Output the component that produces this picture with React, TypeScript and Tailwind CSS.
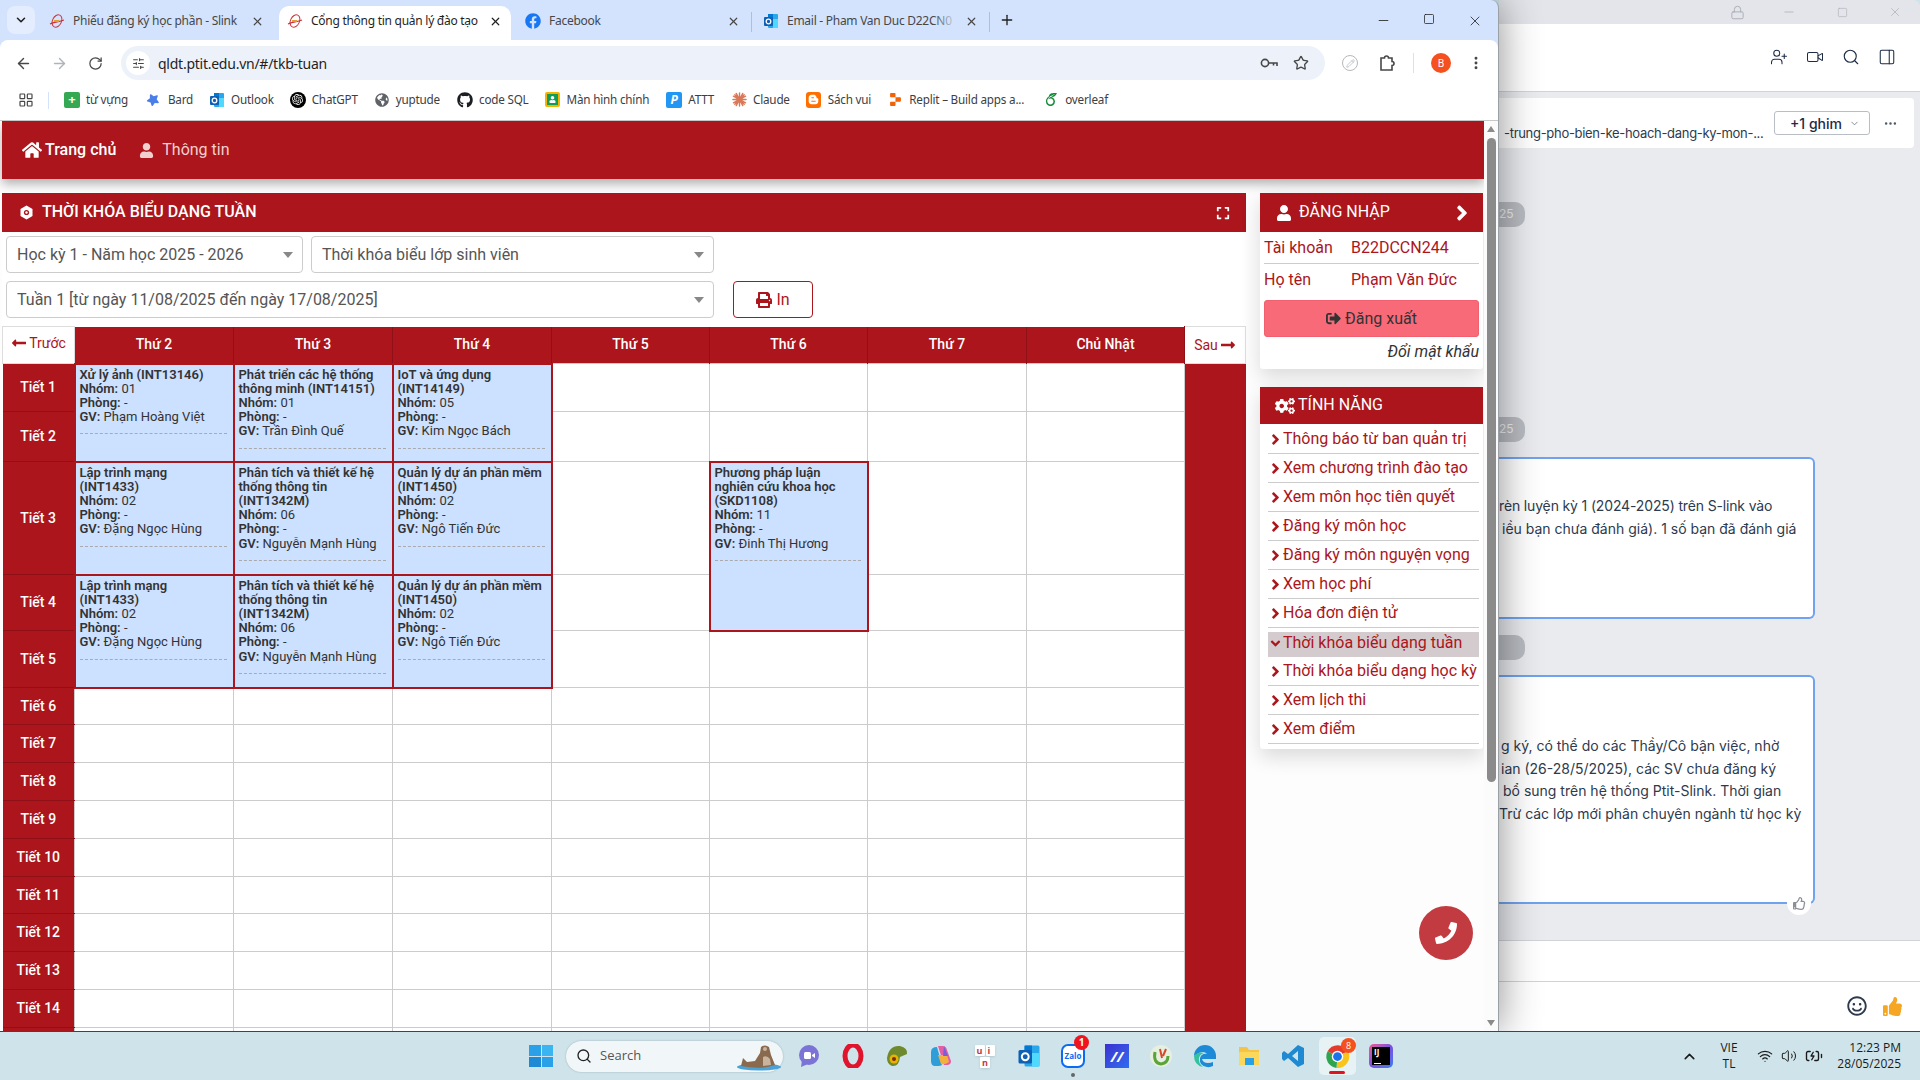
import { ReactNode } from "react";
import {
    FaHome, FaUser, FaPrint, FaLongArrowAltLeft, FaLongArrowAltRight, FaSignOutAlt, FaCogs,
    FaAngleRight, FaAngleDown, FaExpand, FaPhoneAlt, FaFacebook, FaGithub, FaGlobeAmericas,
    FaBloggerB, FaStar, FaThumbsUp, FaRegThumbsUp, FaRegSmile,
} from "react-icons/fa";
import { SiOpenai, SiReplit, SiOverleaf } from "react-icons/si";
import {
    ArrowLeft, ArrowRight, RotateCw, X, Plus, Minus, Square, ChevronDown, ChevronUp, Star,
    EllipsisVertical, LayoutGrid, SlidersHorizontal, Search, Lock, UserPlus,
    Video, PanelRight, Ellipsis, Wifi, Volume2, BatteryCharging, Pencil,
} from "lucide-react";

const RED = "bg-[#ab151b]";

function PtitIcon() {
    return (
        <svg width="16" height="16" viewBox="0 0 16 16" fill="none">
            <ellipse cx="8" cy="8" rx="4.5" ry="6.5" stroke="#c8323a" strokeWidth="1" transform="rotate(25 8 8)" />
            <path d="M1 11 C5 9 10 9 15 7" stroke="#c8323a" strokeWidth="1.2" />
            <rect x="5" y="7" width="5" height="2" fill="#e0a030" />
        </svg>
    );
}

function OutlookIcon({ size = 16 }: { size?: number }) {
    return (
        <svg width={size} height={size} viewBox="0 0 16 16">
            <rect x="5" y="1" width="10" height="14" rx="1" fill="#28a8ea" />
            <rect x="5" y="1" width="5" height="5" fill="#0078d4" />
            <rect x="10" y="6" width="5" height="9" fill="#50d9ff" />
            <rect x="1" y="4" width="9" height="9" rx="1" fill="#0f5fb5" />
            <circle cx="5.5" cy="8.5" r="2.3" fill="none" stroke="#fff" strokeWidth="1.3" />
        </svg>
    );
}

function ChromeLogo({ size = 24 }: { size?: number }) {
    return (
        <svg width={size} height={size} viewBox="0 0 24 24">
            <path d="M12 12 L2.5 7 A11 11 0 0 1 22 7 Z" fill="#e33b2e" />
            <path d="M12 12 L22 7 A11 11 0 0 1 11 23 Z" fill="#f8c51c" />
            <path d="M12 12 L11 23 A11 11 0 0 1 2.5 7 Z" fill="#2ea44f" />
            <circle cx="12" cy="12" r="5.5" fill="#fff" />
            <circle cx="12" cy="12" r="4.2" fill="#1a73e8" />
        </svg>
    );
}

function Tab({ icon, title, active, sep, fade }: { icon: ReactNode; title: string; active?: boolean; sep?: boolean; fade?: boolean }) {
    return (
        <div className="relative h-[34px] w-[238px] shrink-0">
            {active && <div className="absolute left-0 top-0 h-[34px] w-[232px] rounded-t-[10px] bg-white" />}
            {sep && <span className="absolute right-[3px] top-[6px] h-[20px] w-px bg-[#a8c0e8]" />}
            <div className="relative flex items-center pl-[8px] pt-[7px]">
                <span className="flex w-[16px] shrink-0 justify-center">{icon}</span>
                <span className={`relative ml-[8px] w-[170px] overflow-hidden whitespace-nowrap text-[12px] leading-4 tracking-[-0.27px] ${active ? "text-[#1f1f1f]" : "text-[#474747]"}`}>
                    {title}
                    {fade && <span className="absolute right-0 top-0 h-full w-[24px] bg-gradient-to-r from-transparent to-[#d3e3fd]" />}
                </span>
                <X size={13} strokeWidth={2.2} className={`ml-[8px] ${active ? "text-[#1f1f1f]" : "text-[#474747]"}`} />
            </div>
        </div>
    );
}

function Bookmark({ icon, label, gap }: { icon: ReactNode; label: string; gap: number }) {
    return (
        <div className="flex shrink-0 items-center" style={{ marginRight: gap }}>
            <span className="flex w-[18px] justify-center">{icon}</span>
            <span className="ml-[5px] whitespace-nowrap text-[11.7px] tracking-[-0.2px] text-[#3c4043]">{label}</span>
        </div>
    );
}

function SelectBox({ label, className }: { label: string; className: string }) {
    return (
        <div className={`flex h-[37px] items-center justify-between rounded-[4px] border border-[#ccc] bg-white pl-[10px] pr-[9px] text-[16px] text-[#555] ${className}`}>
            <span>{label}</span>
            <span className="h-0 w-0 border-x-[5px] border-t-[6px] border-x-transparent border-t-[#888]" />
        </div>
    );
}

type Course = { name: string; group: string; teacher: string };

function EventCell({ course, rowSpan }: { course: Course; rowSpan?: number }) {
    return (
        <td rowSpan={rowSpan} className="border-2 border-[#ab151b] bg-[#cce0ff] pl-[4px] pr-[6px] pt-[3px] align-top text-[13px] leading-[14.2px] text-[#333]">
            <div className="font-semibold">{course.name}</div>
            <div><b className="font-semibold">Nhóm:</b> {course.group}</div>
            <div><b className="font-semibold">Phòng:</b> -</div>
            <div><b className="font-semibold">GV:</b> {course.teacher}</div>
            <div className="mt-[9px] border-t border-dashed border-[#aaa]" />
        </td>
    );
}

const courses: Record<string, Course> = {
    anh: { name: "Xử lý ảnh (INT13146)", group: "01", teacher: "Phạm Hoàng Việt" },
    he: { name: "Phát triển các hệ thống thông minh (INT14151)", group: "01", teacher: "Trần Đình Quế" },
    iot: { name: "IoT và ứng dụng (INT14149)", group: "05", teacher: "Kim Ngọc Bách" },
    mang: { name: "Lập trình mạng (INT1433)", group: "02", teacher: "Đặng Ngọc Hùng" },
    ptich: { name: "Phân tích và thiết kế hệ thống thông tin (INT1342M)", group: "06", teacher: "Nguyễn Mạnh Hùng" },
    qlda: { name: "Quản lý dự án phần mềm (INT1450)", group: "02", teacher: "Ngô Tiến Đức" },
    nckh: { name: "Phương pháp luận nghiên cứu khoa học (SKD1108)", group: "11", teacher: "Đinh Thị Hương" },
};

const days = ["Thứ 2", "Thứ 3", "Thứ 4", "Thứ 5", "Thứ 6", "Thứ 7", "Chủ Nhật"];
const rowHeights = [48, 50, 113, 56, 57, 37, 38, 38, 38, 38, 37, 38, 38, 38];

const Blank = () => <td className="border border-[#ccc] bg-white" />;
const PeriodCell = ({ label }: { label: string }) => (
    <td className={`border-y border-[#8f1016] ${RED} text-center text-[14px] font-medium text-white`}>{label}</td>
);
const EndCell = () => <td className={`border-y border-[#ab151b] ${RED}`} />;

function Timetable() {
    const rows: ReactNode[] = [];
    for (let i = 0; i < 14; i++) {
        let cells: ReactNode;
        if (i === 0) cells = (<>
            <EventCell course={courses.anh} rowSpan={2} /><EventCell course={courses.he} rowSpan={2} /><EventCell course={courses.iot} rowSpan={2} />
            <Blank /><Blank /><Blank /><Blank />
        </>);
        else if (i === 1) cells = (<><Blank /><Blank /><Blank /><Blank /></>);
        else if (i === 2) cells = (<>
            <EventCell course={courses.mang} /><EventCell course={courses.ptich} /><EventCell course={courses.qlda} />
            <Blank /><EventCell course={courses.nckh} rowSpan={2} /><Blank /><Blank />
        </>);
        else if (i === 3) cells = (<>
            <EventCell course={courses.mang} rowSpan={2} /><EventCell course={courses.ptich} rowSpan={2} /><EventCell course={courses.qlda} rowSpan={2} />
            <Blank /><Blank /><Blank />
        </>);
        else if (i === 4) cells = (<><Blank /><Blank /><Blank /><Blank /></>);
        else cells = (<><Blank /><Blank /><Blank /><Blank /><Blank /><Blank /><Blank /></>);
        rows.push(
            <tr key={i} style={{ height: rowHeights[i] }}>
                <PeriodCell label={`Tiết ${i + 1}`} />
                {cells}
                <EndCell />
            </tr>
        );
    }
    return (
        <table className="w-[1243px] table-fixed border-collapse">
            <colgroup>
                <col className="w-[72px]" />
                <col className="w-[159px]" /><col className="w-[159px]" /><col className="w-[159px]" />
                <col className="w-[158px]" /><col className="w-[158px]" /><col className="w-[159px]" /><col className="w-[158px]" />
                <col className="w-[61px]" />
            </colgroup>
            <thead>
                <tr className="h-[37px]">
                    <th className="border border-[#ddd] bg-white text-[14px] font-normal text-[#ab151b]">
                        <span className="inline-flex items-center gap-[2px]"><FaLongArrowAltLeft size={16} />Trước</span>
                    </th>
                    {days.map((d) => (
                        <th key={d} className={`border-x border-[#8f1016] ${RED} text-[14px] font-medium text-white`}>{d}</th>
                    ))}
                    <th className="border border-[#ddd] bg-white text-[14px] font-normal text-[#ab151b]">
                        <span className="inline-flex items-center gap-[2px]">Sau<FaLongArrowAltRight size={16} /></span>
                    </th>
                </tr>
            </thead>
            <tbody>
                {rows}
                <tr className="h-[20px]">
                    <td className={RED} /><Blank /><Blank /><Blank /><Blank /><Blank /><Blank /><Blank /><td className={RED} />
                </tr>
            </tbody>
        </table>
    );
}

const menuItems = [
    "Thông báo từ ban quản trị", "Xem chương trình đào tạo", "Xem môn học tiên quyết", "Đăng ký môn học",
    "Đăng ký môn nguyện vọng", "Xem học phí", "Hóa đơn điện tử", "Thời khóa biểu dạng tuần",
    "Thời khóa biểu dạng học kỳ", "Xem lịch thi", "Xem điểm",
];

function Sidebar() {
    return (
        <div className="w-[223px] shrink-0 text-[16px] text-[#ab151b]">
            <div className="rounded-[3px] bg-white shadow-[0_8px_20px_rgba(0,0,0,0.14)]">
                <div className={`flex h-[39px] items-center ${RED} pl-[16px] pr-[9px] text-white`}>
                    <FaUser size={16} />
                    <span className="ml-[7px] flex-1 pb-[2px]">ĐĂNG NHẬP</span>
                    <FaAngleRight size={24} />
                </div>
                <div className="px-[4px] pb-[6px]">
                    <div className="flex h-[32px] items-center border-b border-[#ccc]">
                        <span className="w-[87px]">Tài khoản</span><span>B22DCCN244</span>
                    </div>
                    <div className="flex h-[32px] items-center">
                        <span className="w-[87px]">Họ tên</span><span>Phạm Văn Đức</span>
                    </div>
                    <div className="mt-[4px] flex h-[37px] items-center justify-center gap-[4px] rounded-[3px] border border-[#f0606e] bg-[#f96a79] text-[#333]">
                        <FaSignOutAlt size={15} />Đăng xuất
                    </div>
                    <div className="mt-[4px] text-right text-[16px] italic leading-[22px] text-[#333]">Đổi mật khẩu</div>
                </div>
            </div>
            <div className="mt-[18px] rounded-[3px] bg-white pb-[5px] shadow-[0_8px_20px_rgba(0,0,0,0.14)]">
                <div className={`flex h-[37px] items-center ${RED} pl-[15px] text-white`}>
                    <FaCogs size={20} />
                    <span className="ml-[3px] pb-[1px]">TÍNH NĂNG</span>
                </div>
                <div className="pl-[8px] pr-[4px] pt-[1px]">
                    {menuItems.map((item) => {
                        const active = item === "Thời khóa biểu dạng tuần";
                        return (
                            <div key={item} className={`flex h-[29px] whitespace-nowrap ${active ? "items-end" : "items-center border-b border-[#ccc]"}`}>
                                <div className={`flex h-[25px] w-full items-center ${active ? "bg-[#d3cbcd] pb-[3px]" : ""}`}>
                                    {active ? <FaAngleDown size={15} className="w-[15px] shrink-0" /> : <FaAngleRight size={17} className="w-[15px] shrink-0" />}
                                    <span>{item}</span>
                                </div>
                            </div>
                        );
                    })}
                </div>
            </div>
        </div>
    );
}

function ChromeWindow() {
    return (
        <div className="relative z-10 flex h-full w-[1499px] shrink-0 flex-col overflow-hidden rounded-tr-[8px] border-r border-[#9aa0a6] bg-[#d3e3fd] font-['Noto_Sans',sans-serif] shadow-[0_0_42px_rgba(0,0,0,0.45)]">
            <div className="flex h-[40px] shrink-0 items-end">
                <div className="mb-[6px] ml-[7px] flex h-[28px] w-[28px] items-center justify-center rounded-[8px] bg-[#e3edfd]">
                    <ChevronDown size={14} strokeWidth={2.6} className="text-[#1f1f1f]" />
                </div>
                <div className="ml-[6px] flex">
                    <Tab icon={<PtitIcon />} title="Phiếu đăng ký học phần - Slink" />
                    <Tab icon={<PtitIcon />} title="Cổng thông tin quản lý đào tạo" active />
                    <Tab icon={<FaFacebook size={16} className="text-[#1877f2]" />} title="Facebook" sep />
                    <Tab icon={<OutlookIcon />} title="Email - Pham Van Duc D22CN0" sep fade />
                </div>
                <Plus size={16} strokeWidth={2} className="mb-[12px] ml-[6px] text-[#1f1f1f]" />
                <div className="mb-[11px] ml-auto flex">
                    <span className="flex w-[46px] justify-center"><Minus size={15} strokeWidth={1.3} className="text-[#1f1f1f]" /></span>
                    <span className="flex w-[46px] justify-center"><Square size={12} strokeWidth={1.5} className="text-[#1f1f1f]" /></span>
                    <span className="flex w-[46px] justify-center"><X size={16} strokeWidth={1.2} className="text-[#1f1f1f]" /></span>
                </div>
            </div>

            <div className="flex h-[46px] shrink-0 items-center rounded-t-[8px] bg-white pl-[5px]">
                <span className="flex w-[36px] justify-center"><ArrowLeft size={17} className="text-[#474747]" /></span>
                <span className="flex w-[36px] justify-center"><ArrowRight size={17} className="text-[#b0b3b8]" /></span>
                <span className="flex w-[36px] justify-center"><RotateCw size={15} className="text-[#474747]" /></span>
                <div className="ml-[8px] flex h-[34px] w-[1204px] items-center rounded-full bg-[#edf2fa] pl-[5px] pr-[16px]">
                    <span className="flex h-[24px] w-[24px] items-center justify-center rounded-full bg-white"><SlidersHorizontal size={13} className="text-[#474747]" /></span>
                    <span className="ml-[8px] flex-1 text-[14px] tracking-[-0.25px] text-[#1f1f1f]">qldt.ptit.edu.vn/#/tkb-tuan</span>
                    <svg width="18" height="12" viewBox="0 0 18 12" fill="none" stroke="#474747" strokeWidth="1.6" className="mr-[15px]">
                        <circle cx="5" cy="6" r="3.6" />
                        <path d="M9 6 H17 V9 M13.5 6 V8.5" />
                    </svg>
                    <Star size={16} strokeWidth={2} className="text-[#474747]" />
                </div>
                <span className="ml-[17px] flex h-[16px] w-[16px] items-center justify-center rounded-full border border-[#b5b8bc]"><Pencil size={9} className="text-[#b5b8bc]" /></span>
                <svg width="17" height="18" viewBox="0 0 17 18" fill="none" stroke="#474747" strokeWidth="1.6" className="ml-[21px]">
                    <path d="M2 4 H5.5 A2 2 0 0 1 9.5 4 H13 V7.5 A2 2 0 0 1 13 11.5 V16 H2 Z" />
                </svg>
                <span className="ml-[17px] h-[20px] w-px bg-[#d3e3fd]" />
                <span className="ml-[17px] flex h-[20px] w-[20px] items-center justify-center rounded-full bg-[#f4511e] text-[10px] text-white">B</span>
                <EllipsisVertical size={16} strokeWidth={2.4} className="ml-[17px] text-[#474747]" />
            </div>

            <div className="flex h-[35px] shrink-0 items-center border-b border-[#c7c7c7] bg-white pb-[6px] pl-[18px]">
                <LayoutGrid size={16} strokeWidth={1.8} className="text-[#474747]" />
                <span className="ml-[14px] mr-[14px] h-[17px] w-px bg-[#d3e3fd]" />
                <Bookmark gap={17} label="từ vựng" icon={<span className="flex h-[16px] w-[16px] items-center justify-center rounded-[2px] bg-[#34a853] text-[13px] font-bold leading-none text-white">+</span>} />
                <Bookmark gap={15} label="Bard" icon={<FaStar size={13} className="rotate-45 text-[#4a7fe8]" />} />
                <Bookmark gap={15} label="Outlook" icon={<OutlookIcon />} />
                <Bookmark gap={15} label="ChatGPT" icon={<span className="flex h-[16px] w-[16px] items-center justify-center rounded-full bg-black"><SiOpenai size={11} className="text-white" /></span>} />
                <Bookmark gap={16} label="yuptude" icon={<FaGlobeAmericas size={14} className="text-[#5f6368]" />} />
                <Bookmark gap={15} label="code SQL" icon={<FaGithub size={16} className="text-[#1b1f23]" />} />
                <Bookmark gap={16} label="Màn hình chính" icon={<span className="flex h-[15px] w-[15px] items-center justify-center rounded-[2px] border-2 border-[#f4b400] bg-[#0f9d58]"><FaUser size={7} className="text-white" /></span>} />
                <Bookmark gap={16} label="ATTT" icon={<span className="flex h-[16px] w-[16px] items-center justify-center rounded-[2px] bg-[#2196f3] text-[12px] font-bold italic leading-none text-white">P</span>} />
                <Bookmark gap={15} label="Claude" icon={
                    <svg width="15" height="15" viewBox="0 0 16 16" stroke="#d97757" strokeWidth="1.5" strokeLinecap="round">
                        <path d="M8 1 V15 M1 8 H15 M3 3 L13 13 M13 3 L3 13 M4.5 1.5 L11.5 14.5 M11.5 1.5 L4.5 14.5 M1.5 4.5 L14.5 11.5 M14.5 4.5 L1.5 11.5" />
                    </svg>
                } />
                <Bookmark gap={15} label="Sách vui" icon={<span className="flex h-[16px] w-[15px] items-center justify-center rounded-[3px] bg-[#ff6f00]"><FaBloggerB size={11} className="text-white" /></span>} />
                <Bookmark gap={18} label="Replit – Build apps a..." icon={<SiReplit size={13} className="text-[#f26207]" />} />
                <Bookmark gap={0} label="overleaf" icon={<SiOverleaf size={13} className="text-[#138a36]" />} />
            </div>

            <div className="relative flex min-h-0 flex-1 bg-[#fdfdfd] font-['Roboto',sans-serif]">
                <div className="w-[1484px] shrink-0 overflow-hidden pl-[2px]">
                    <div className={`flex h-[58px] items-start ${RED} pl-[20px] pt-[19px] text-[16px] leading-5 shadow-[0_5px_10px_rgba(0,0,0,0.3)]`}>
                        <span className="flex items-center font-medium text-white"><FaHome size={20} className="mr-[3px]" />Trang chủ</span>
                        <span className="ml-[23px] flex items-center text-[#f3d0d0]"><FaUser size={15} className="mr-[8px]" />Thông tin</span>
                    </div>
                    <div className="mt-[14px] flex gap-[14px]">
                        <div className="w-[1244px] shrink-0 bg-white">
                            <div className={`flex h-[39px] items-center ${RED} pl-[18px] pr-[16px] text-[16px] font-medium text-white`}>
                                <svg width="13" height="15" viewBox="0 0 13 15" fill="none">
                                    <path d="M6.5 0.5 L12.5 4 V11 L6.5 14.5 L0.5 11 V4 Z" fill="#fff" />
                                    <circle cx="6.5" cy="7.5" r="2.6" fill="#ab151b" />
                                    <circle cx="6.5" cy="7.5" r="1.2" fill="#fff" />
                                </svg>
                                <span className="ml-[9px] flex-1 pb-[2px]">THỜI KHÓA BIỂU DẠNG TUẦN</span>
                                <FaExpand size={14} />
                            </div>
                            <div className="flex gap-[8px] pl-[4px] pt-[4px]">
                                <SelectBox label="Học kỳ 1 - Năm học 2025 - 2026" className="w-[297px]" />
                                <SelectBox label="Thời khóa biểu lớp sinh viên" className="w-[403px]" />
                            </div>
                            <div className="flex pl-[4px] pt-[8px]">
                                <SelectBox label="Tuần 1 [từ ngày 11/08/2025 đến ngày 17/08/2025]" className="w-[708px]" />
                                <div className="ml-[19px] flex h-[37px] w-[80px] items-center justify-center gap-[4px] rounded-[4px] border border-[#ab151b] text-[16px] text-[#ab151b]">
                                    <FaPrint size={16} />In
                                </div>
                            </div>
                            <div className="mt-[8px]"><Timetable /></div>
                        </div>
                        <Sidebar />
                    </div>
                </div>
                <div className="relative w-[14px] shrink-0 bg-[#fbfbfb]">
                    <span className="absolute left-[3px] top-[5px] h-0 w-0 border-x-[4px] border-b-[6px] border-x-transparent border-b-[#8b8b8b]" />
                    <span className="absolute left-[3px] top-[17px] h-[644px] w-[9px] rounded-full bg-[#8b8b8b]" />
                    <span className="absolute bottom-[5px] left-[3px] h-0 w-0 border-x-[4px] border-t-[6px] border-x-transparent border-t-[#8b8b8b]" />
                </div>
                <div className="absolute left-[1419px] top-[785px] flex h-[54px] w-[54px] items-center justify-center rounded-full bg-[#c23b41] text-white">
                    <FaPhoneAlt size={22} className="-scale-x-100" />
                </div>
            </div>
        </div>
    );
}

function ChatWindow() {
    return (
        <div className="flex h-full min-w-0 flex-1 flex-col overflow-hidden rounded-tr-[8px] bg-[#e9ebef] font-['Inter',sans-serif] text-[#1c2b45]">
            <div className="flex h-[24px] shrink-0 items-center bg-[#e3e5ea] text-[#a9adb5]">
                <Lock size={15} strokeWidth={1.5} className="ml-[231px]" />
                <Minus size={14} strokeWidth={1.3} className="ml-[37px]" />
                <Square size={11} strokeWidth={1.3} className="ml-[41px]" />
                <X size={14} strokeWidth={1.2} className="ml-[40px]" />
            </div>
            <div className="flex h-[68px] shrink-0 items-center gap-[18px] border-b border-[#d0d3d8] bg-white pb-[1px] pl-[271px]">
                <UserPlus size={18} strokeWidth={1.4} />
                <Video size={18} strokeWidth={1.4} />
                <Search size={18} strokeWidth={1.5} />
                <PanelRight size={18} strokeWidth={1.4} />
            </div>
            <div className="mr-[6px] mt-[6px] flex h-[50px] shrink-0 items-center rounded-r-[4px] bg-white">
                <span className="w-[259px] shrink-0 self-end whitespace-nowrap pb-[6px] pl-[5px] text-[13px] leading-[17px] tracking-[-0.3px] text-[#2e3a4d]">-trung-pho-bien-ke-hoach-dang-ky-mon-...</span>
                <div className="ml-[16px] flex h-[24px] w-[96px] items-center justify-center gap-[7px] rounded-[3px] border border-[#b9bdc4] pl-[6px] text-[14px] font-medium">
                    +1 ghim<ChevronDown size={11} className="text-[#7b8494]" />
                </div>
                <Ellipsis size={15} className="ml-[13px] text-[#4d5869]" />
            </div>
            <div className="flex min-h-0 flex-1 flex-col text-[14px] leading-[22.5px] text-[#2e3a4d]">
                <div className="mt-[54px] flex h-[25px] w-[26px] shrink-0 items-center rounded-r-[10px] bg-[#b9bcc2] text-[12px] text-[#eef0f3]">25</div>
                <div className="mt-[190px] flex h-[25px] w-[26px] shrink-0 items-center rounded-r-[10px] bg-[#b9bcc2] text-[12px] text-[#eef0f3]">25</div>
                <div className="mt-[15px] h-[162px] w-[316px] shrink-0 rounded-r-[6px] border-y-2 border-r-2 border-[#6fa3ef] bg-white pt-[36px] whitespace-nowrap">
                    <div className="tracking-[-0.15px]">rèn luyện kỳ 1 (2024-2025) trên S-link vào</div>
                    <div className="pl-[3px]">iều bạn chưa đánh giá). 1 số bạn đã đánh giá</div>
                </div>
                <div className="mt-[16px] h-[25px] w-[26px] shrink-0 rounded-r-[10px] bg-[#b9bcc2]" />
                <div className="relative mt-[15px] h-[229px] w-[316px] shrink-0 rounded-r-[6px] border-y-2 border-r-2 border-[#6fa3ef] bg-white pt-[58px] whitespace-nowrap">
                    <div className="pl-[2px]">g ký, có thể do các Thầy/Cô bận việc, nhờ</div>
                    <div className="pl-[2px]">ian (26-28/5/2025), các SV chưa đăng ký</div>
                    <div className="pl-[4px]">bổ sung trên hệ thống Ptit-Slink. Thời gian</div>
                    <div>Trừ các lớp mới phân chuyên ngành từ học kỳ</div>
                    <span className="absolute -bottom-[13px] right-[2px] flex h-[24px] w-[24px] items-center justify-center rounded-full bg-white text-[#8a8f98]"><FaRegThumbsUp size={13} /></span>
                </div>
                <div className="flex-1" />
                <div className="h-[41px] shrink-0 border-t border-[#d0d3d8] bg-white" />
                <div className="flex h-[50px] shrink-0 items-center border-t border-[#d0d3d8] bg-white pb-[1px] pl-[348px]">
                    <FaRegSmile size={20} />
                    <FaThumbsUp size={19} className="ml-[16px] text-[#f5a623]" />
                </div>
            </div>
        </div>
    );
}

function TaskIcon({ children, badge }: { children: ReactNode; badge?: ReactNode }) {
    return (
        <div className="relative flex h-[38px] w-[44px] shrink-0 items-center justify-center">
            {children}
            {badge}
        </div>
    );
}

function Taskbar() {
    return (
        <div className="flex h-[49px] shrink-0 items-center border-t border-[#2f4a52] bg-[#cfe4ea] font-['Open_Sans',sans-serif] text-[#1a1a1a]">
            <div className="ml-[529px] grid h-[22px] w-[24px] grid-cols-2 gap-[1px]">
                <span className="bg-[#2aa0e8]" /><span className="bg-[#3bb4f2]" /><span className="bg-[#1e8ad6]" /><span className="bg-[#2aa0e8]" />
            </div>
            <div className="relative ml-[13px] flex h-[31px] w-[217px] items-center rounded-full bg-[#f1f7f9] pl-[10px] text-[13px] text-[#555] shadow-[0_0_2px_rgba(0,0,0,0.25)]">
                <Search size={16} strokeWidth={2} className="text-[#222]" />
                <span className="ml-[8px]">Search</span>
                <svg width="50" height="30" viewBox="0 0 50 30" className="absolute right-0 top-0">
                    <ellipse cx="26" cy="26" rx="22" ry="3.5" fill="#4aa3d8" />
                    <path d="M8 25 L10 17 L14 21 L22 20 L27 12 L28 6 Q32 3 36 6 L38 14 L42 24 Q28 29 8 25 Z" fill="#8a6a4f" />
                    <path d="M30 16 Q34 14 37 18 L38 24 L30 25 Z" fill="#c8b49c" />
                    <circle cx="32" cy="8" r="2" fill="#c8b49c" />
                </svg>
            </div>
            <div className="ml-[4px] flex">
                <TaskIcon><svg width="24" height="24" viewBox="0 0 24 24"><circle cx="12" cy="11" r="10" fill="#7b73d6" /><path d="M5 16 L4 23 L11 20 Z" fill="#7b73d6" /><rect x="7" y="8" width="7" height="7" rx="1.5" fill="#fff" /><path d="M15 11 L18 9 V14 L15 12 Z" fill="#fff" /></svg></TaskIcon>
                <TaskIcon><svg width="24" height="24" viewBox="0 0 24 24"><ellipse cx="12" cy="12" rx="8" ry="11" fill="none" stroke="#e0142c" strokeWidth="5" /></svg></TaskIcon>
                <TaskIcon><svg width="24" height="24" viewBox="0 0 24 24"><path d="M2 14 Q4 1 15 2 Q23 4 22 10 L15 13 Q14 23 7 22 Q2 20 2 14 Z" fill="#6e8a2c" /><circle cx="9" cy="15" r="4.5" fill="#e5b300" /><circle cx="9" cy="15" r="2" fill="#7a2d12" /></svg></TaskIcon>
                <TaskIcon><svg width="24" height="24" viewBox="0 0 24 24"><path d="M9 2 H14 Q17 2 18 6 L22 17 Q22 21 18 21 H15 L9 2 Z" fill="#e35fa5" /><path d="M2 8 Q2 3 8 3 L13 21 Q12 22 9 22 H6 Q2 22 2 17 Z" fill="#2f9ed8" /><path d="M9 11 H18 L20 18 Q16 21 12 20 Z" fill="#f1b13c" /><path d="M15 2 L19 12 L14 12 Z" fill="#7c5dd8" /></svg></TaskIcon>
                <TaskIcon>
                    <div className="grid grid-cols-2 gap-[1px] text-[9px] font-bold leading-[11px] text-[#c23b41]">
                        <span className="rounded-[1px] bg-white px-[2px] shadow-sm">u</span><span className="rounded-[1px] bg-white px-[2px] shadow-sm">i</span>
                        <span className="col-span-2 justify-self-center rounded-[1px] bg-white px-[2px] shadow-sm">n</span>
                    </div>
                </TaskIcon>
                <TaskIcon><OutlookIcon size={24} /></TaskIcon>
                <TaskIcon badge={<>
                    <span className="absolute right-[6px] top-[-2px] flex h-[15px] w-[15px] items-center justify-center rounded-full bg-[#f0141e] text-[10px] font-bold text-white">1</span>
                    <span className="absolute bottom-[-2px] h-[4px] w-[4px] rounded-full bg-[#666]" />
                </>}>
                    <span className="flex h-[24px] w-[24px] items-center justify-center rounded-[7px] border-2 border-[#0a6cf5] bg-white text-[8px] font-bold text-[#0a6cf5]">Zalo</span>
                </TaskIcon>
                <TaskIcon><span className="flex h-[24px] w-[24px] items-center justify-center bg-gradient-to-br from-[#3b2fd0] to-[#2e6cf0] text-[15px] font-bold italic leading-none text-white">//</span></TaskIcon>
                <TaskIcon><svg width="24" height="24" viewBox="0 0 24 24"><circle cx="12" cy="12" r="11" fill="#e6efe0" /><path d="M6 8 Q4 19 12 20 Q19 19 19 12" fill="none" stroke="#5aa43a" strokeWidth="3" /><path d="M11 5 L13 14 M17 5 L14 12" stroke="#d9472b" strokeWidth="2" /></svg></TaskIcon>
                <TaskIcon><svg width="24" height="24" viewBox="0 0 24 24"><path d="M1 12 A11 11 0 0 1 23 12 L23 15 H9 Q10 19 15 19 Q18 19 20 18 V22 Q17 23.5 14 23 Q6 22 7 14 Q9 9 14 10 Q10 5 1 12 Z" fill="#1c8ad6" /><path d="M1 12 Q1 21 10 23 Q5 19 6 14 Q7 10 11 9 Q5 7 1 12 Z" fill="#35c1a0" /></svg></TaskIcon>
                <TaskIcon><svg width="24" height="24" viewBox="0 0 24 24"><path d="M2 3 H10 L12 6 H22 V21 H2 Z" fill="#f6c445" /><rect x="2" y="8" width="20" height="13" rx="1" fill="#fbd75b" /><rect x="8" y="14" width="9" height="7" fill="#2aa0e8" /></svg></TaskIcon>
                <TaskIcon><svg width="24" height="24" viewBox="0 0 24 24"><path d="M17 1 L23 4 V20 L17 23 L7 14 L3 17 L1 15 V9 L3 7 L7 10 Z M17 7 L11 12 L17 17 Z" fill="#1f8ad2" fillRule="evenodd" /></svg></TaskIcon>
                <TaskIcon badge={<>
                    <span className="absolute right-[3px] top-[1px] flex h-[15px] w-[15px] items-center justify-center rounded-full bg-[#f4511e] text-[9px] text-white">8</span>
                    <span className="absolute bottom-[1px] h-[3px] w-[16px] rounded-full bg-[#e0141e]" />
                </>}>
                    <div className="flex h-[38px] w-[37px] items-center justify-center rounded-[5px] bg-white/50"><ChromeLogo size={25} /></div>
                </TaskIcon>
                <TaskIcon>
                    <div className="flex h-[24px] w-[24px] items-start rounded-[5px] bg-gradient-to-br from-[#f0508c] via-[#7b4de0] to-[#2f7cf0] p-[3px]">
                        <span className="flex h-full w-full flex-col items-start justify-between bg-black px-[2px] pb-[1px] text-[8px] font-bold leading-[9px] text-white">IJ<span className="h-px w-[7px] bg-white" /></span>
                    </div>
                </TaskIcon>
            </div>
            <ChevronUp size={17} strokeWidth={2.2} className="ml-[278px]" />
            <div className="ml-[13px] w-[36px] text-center text-[12px] leading-[16px]">VIE<br />TL</div>
            <Wifi size={16} strokeWidth={1.8} className="ml-[10px]" />
            <Volume2 size={16} strokeWidth={1.5} className="ml-[8px]" />
            <BatteryCharging size={18} strokeWidth={1.8} className="ml-[8px]" />
            <div className="ml-auto mr-[19px] text-right text-[12px] leading-[16px]">12:23 PM<br />28/05/2025</div>
        </div>
    );
}

export default function App() {
    return (
        <div className="flex h-[1080px] w-[1920px] flex-col overflow-hidden bg-[#cfe4ea]">
            <div className="flex h-[1031px] shrink-0 overflow-hidden">
                <ChromeWindow />
                <ChatWindow />
            </div>
            <Taskbar />
        </div>
    );
}
